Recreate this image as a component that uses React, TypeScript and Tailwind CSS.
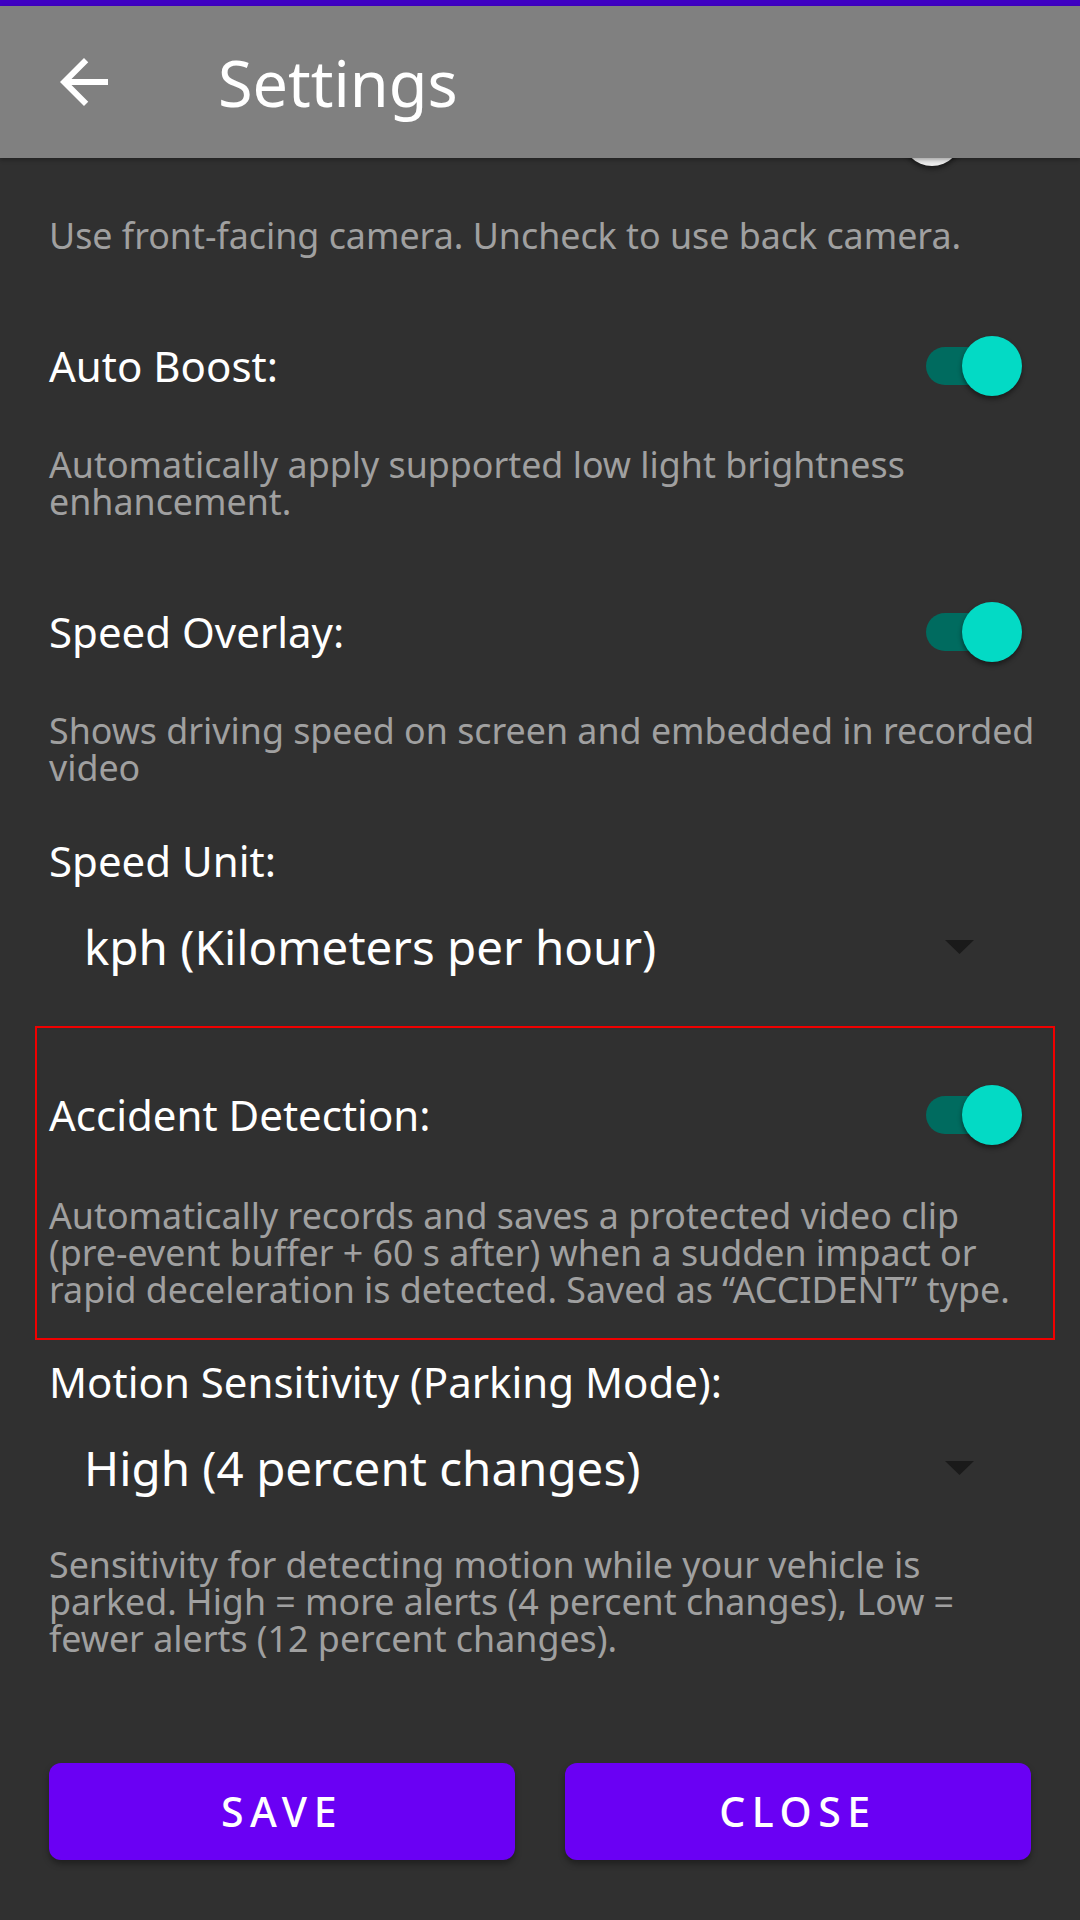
import React from 'react';

const font = { fontFamily: '"Noto Sans", "Open Sans", sans-serif' };

function Toggle({ on }: { on: boolean }) {
  return (
    <div className="relative h-[60px] w-[120px] shrink-0">
      <div
        className={
          'absolute left-[24px] top-[11px] h-[38px] w-[88px] rounded-full ' +
          (on ? 'bg-[#006b5f]' : 'bg-[#6b6b6b]')
        }
      />
      <div
        className={
          'absolute top-0 h-[60px] w-[60px] rounded-full shadow-[0_3px_5px_rgba(0,0,0,0.45)] ' +
          (on ? 'left-[60px] bg-[#03dac5]' : 'left-0 bg-[#ececec]')
        }
      />
    </div>
  );
}

function SwitchRow({ title, on }: { title: string; on: boolean }) {
  return (
    <div className="flex h-[60px] items-center justify-between">
      <span className="text-[42px] leading-[60px] text-white">{title}</span>
      <Toggle on={on} />
    </div>
  );
}

function Desc({ lines }: { lines: string[] }) {
  return (
    <div className="text-[35.8px] leading-[37px] text-[#a0a0a0]">
      {lines.map((l) => (
        <div key={l} className="whitespace-nowrap">
          {l}
        </div>
      ))}
    </div>
  );
}

function Dropdown({ value }: { value: string }) {
  return (
    <div className="flex h-[60px] items-center justify-between pl-[35px] pr-[48px]">
      <span className="text-[47.5px] leading-[60px] text-white">{value}</span>
      <svg width="29" height="14" viewBox="0 0 29 14">
        <path d="M0 0h29L14.5 14z" fill="#1a1a1a" />
      </svg>
    </div>
  );
}

export default function App() {
  return (
    <div className="flex h-[1920px] w-[1080px] flex-col overflow-hidden bg-[#303030]" style={font}>
      <div className="relative z-10 shrink-0">
        <div className="h-[6px] bg-[#3f00c2]" />
        <div className="flex h-[152px] items-center bg-[#808080] shadow-[0_2px_4px_rgba(0,0,0,0.3)]">
          <svg className="ml-[48px]" width="72" height="72" viewBox="0 0 24 24">
            <path d="M20 11H7.83l5.59-5.59L12 4l-8 8 8 8 1.41-1.41L7.83 13H20v-2z" fill="#ffffff" />
          </svg>
          <span className="ml-[98px] text-[63px] leading-none text-white">Settings</span>
        </div>
      </div>

      <div className="flex flex-1 flex-col pl-[49px] pr-[58px]">
        <div className="-mt-[52px] flex h-[60px] justify-end">
          <Toggle on={false} />
        </div>

        <div className="mt-[51px]">
          <Desc lines={['Use front-facing camera. Uncheck to use back camera.']} />
        </div>

        <div className="mt-[82px]">
          <SwitchRow title="Auto Boost:" on />
        </div>
        <div className="mt-[50px]">
          <Desc lines={['Automatically apply supported low light brightness', 'enhancement.']} />
        </div>

        <div className="mt-[82px]">
          <SwitchRow title="Speed Overlay:" on />
        </div>
        <div className="mt-[50px]">
          <Desc lines={['Shows driving speed on screen and embedded in recorded', 'video']} />
        </div>

        <div className="mt-[50px] text-[42px] leading-[50px] text-white">Speed Unit:</div>
        <div className="mt-[31px]">
          <Dropdown value="kph (Kilometers per hour)" />
        </div>

        <div className="-ml-[14px] -mr-[33px] mt-[49px] border-2 border-[#f00000] pb-[30px] pl-[12px] pr-[31px] pt-[57px]">
          <SwitchRow title="Accident Detection:" on />
          <div className="mt-[52px]">
            <Desc
              lines={[
                'Automatically records and saves a protected video clip',
                '(pre-event buffer + 60 s after) when a sudden impact or',
                'rapid deceleration is detected. Saved as \u201CACCIDENT\u201D type.',
              ]}
            />
          </div>
        </div>

        <div className="mt-[17px] text-[42px] leading-[50px] text-white">
          Motion Sensitivity (Parking Mode):
        </div>
        <div className="mt-[31px]">
          <Dropdown value="High (4 percent changes)" />
        </div>
        <div className="mt-[48px]">
          <Desc
            lines={[
              'Sensitivity for detecting motion while your vehicle is',
              'parked. High = more alerts (4 percent changes), Low =',
              'fewer alerts (12 percent changes).',
            ]}
          />
        </div>

        <div className="-mr-[9px] mt-[106px] flex gap-[50px]">
          <button className="h-[97px] flex-1 rounded-[12px] bg-[#6a00f4] text-[41px] font-medium tracking-[0.16em] text-white shadow-[0_4px_6px_rgba(0,0,0,0.35)]">
            SAVE
          </button>
          <button className="h-[97px] flex-1 rounded-[12px] bg-[#6a00f4] text-[41px] font-medium tracking-[0.16em] text-white shadow-[0_4px_6px_rgba(0,0,0,0.35)]">
            CLOSE
          </button>
        </div>
      </div>
    </div>
  );
}
